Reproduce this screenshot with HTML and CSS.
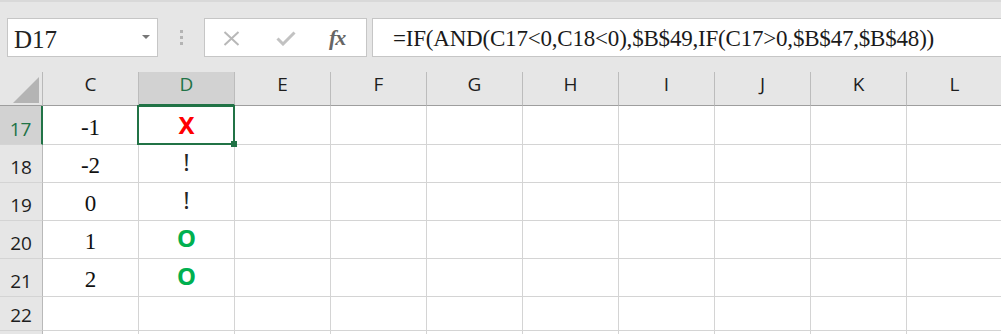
FILE: index.html
```html
<!DOCTYPE html>
<html>

<head>
    <title>Sheet1</title>
    <meta name="viewport" content="width=device-width, initial-scale=1.0">
    <link rel="stylesheet" href="styles.css">
</head>

<body>
    <div class="toolbar">
        <div class="name-box">
            <span class="name">D17</span>
            <span class="caret"></span>
        </div>
        <div class="grip"><i></i><i></i><i></i></div>
        <div class="fx-buttons">
            <svg class="icon-cancel" width="17" height="15" viewBox="0 0 17 15">
                <path d="M1.5 1 L15.5 14 M15.5 1 L1.5 14" stroke="#b8b8b8" stroke-width="2" fill="none" />
            </svg>
            <svg class="icon-enter" width="20" height="15" viewBox="0 0 20 15">
                <path d="M1.5 7.5 L7 13 L18.5 1.5" stroke="#c2c2c2" stroke-width="3" fill="none" />
            </svg>
            <span class="fx">fx</span>
        </div>
        <div class="formula">=IF(AND(C17&lt;0,C18&lt;0),$B$49,IF(C17&gt;0,$B$47,$B$48))</div>
    </div>

    <div class="sheet">
        <!-- column headers -->
        <div class="cell corner">
            <svg width="26" height="26" viewBox="0 0 26 26">
                <polygon points="26,0 26,26 0,26" fill="#b4b4b4" />
            </svg>
        </div>
        <div class="cell col-head">C</div>
        <div class="cell col-head current">D</div>
        <div class="cell col-head">E</div>
        <div class="cell col-head">F</div>
        <div class="cell col-head">G</div>
        <div class="cell col-head">H</div>
        <div class="cell col-head">I</div>
        <div class="cell col-head">J</div>
        <div class="cell col-head">K</div>
        <div class="cell col-head">L</div>

        <!-- row 17 -->
        <div class="cell row-head current">17</div>
        <div class="cell num">-1</div>
        <div class="cell mark bad active">X</div>
        <div class="cell"></div><div class="cell"></div><div class="cell"></div><div class="cell"></div>
        <div class="cell"></div><div class="cell"></div><div class="cell"></div><div class="cell"></div>

        <!-- row 18 -->
        <div class="cell row-head">18</div>
        <div class="cell num">-2</div>
        <div class="cell mark warn">!</div>
        <div class="cell"></div><div class="cell"></div><div class="cell"></div><div class="cell"></div>
        <div class="cell"></div><div class="cell"></div><div class="cell"></div><div class="cell"></div>

        <!-- row 19 -->
        <div class="cell row-head">19</div>
        <div class="cell num">0</div>
        <div class="cell mark warn">!</div>
        <div class="cell"></div><div class="cell"></div><div class="cell"></div><div class="cell"></div>
        <div class="cell"></div><div class="cell"></div><div class="cell"></div><div class="cell"></div>

        <!-- row 20 -->
        <div class="cell row-head">20</div>
        <div class="cell num">1</div>
        <div class="cell mark good">O</div>
        <div class="cell"></div><div class="cell"></div><div class="cell"></div><div class="cell"></div>
        <div class="cell"></div><div class="cell"></div><div class="cell"></div><div class="cell"></div>

        <!-- row 21 -->
        <div class="cell row-head">21</div>
        <div class="cell num">2</div>
        <div class="cell mark good">O</div>
        <div class="cell"></div><div class="cell"></div><div class="cell"></div><div class="cell"></div>
        <div class="cell"></div><div class="cell"></div><div class="cell"></div><div class="cell"></div>

        <!-- row 22 -->
        <div class="cell row-head">22</div>
        <div class="cell"></div><div class="cell"></div>
        <div class="cell"></div><div class="cell"></div><div class="cell"></div><div class="cell"></div>
        <div class="cell"></div><div class="cell"></div><div class="cell"></div><div class="cell"></div>

        <!-- next row, only its top edge shows -->
        <div class="cell row-head"></div>
        <div class="cell"></div><div class="cell"></div>
        <div class="cell"></div><div class="cell"></div><div class="cell"></div><div class="cell"></div>
        <div class="cell"></div><div class="cell"></div><div class="cell"></div><div class="cell"></div>
    </div>
</body>

</html>
```

FILE: styles.css
```css
body {
    margin: 0;
    padding: 0;
    width: 1001px;
    height: 334px;
    overflow: hidden;
    background-color: #fff;
    font-family: "Liberation Serif", serif;
    color: #1a1a1a;
}

/* formula bar */
.toolbar {
    height: 72px;
    box-sizing: border-box;
    background-color: #e6e6e6;
    border-top: 2px solid #d9d9d9;
    display: flex;
    align-items: flex-start;
    padding: 16px 0 0 7px;
}

.name-box {
    width: 151px;
    height: 39px;
    box-sizing: border-box;
    border: 1px solid #c6c6c6;
    background-color: #fff;
    display: flex;
    align-items: center;
    justify-content: space-between;
    padding: 0 7px 0 6px;
}

.name {
    font-family: "Liberation Serif", serif;
    font-size: 25px;
    line-height: 25px;
    margin-top: 3px;
    color: #222;
}

.caret {
    width: 0;
    height: 0;
    border-left: 4px solid transparent;
    border-right: 4px solid transparent;
    border-top: 4px solid #777;
    margin-top: -2px;
}

.grip {
    width: 46px;
    height: 39px;
    display: flex;
    flex-direction: column;
    align-items: center;
    justify-content: center;
    gap: 3px;
}

.grip i {
    display: block;
    width: 3px;
    height: 3px;
    background-color: #b4b4b4;
}

.fx-buttons {
    width: 163px;
    height: 39px;
    box-sizing: border-box;
    border: 1px solid #c6c6c6;
    background-color: #fff;
    display: flex;
    align-items: center;
}

.icon-cancel {
    margin-left: 18px;
    margin-top: 1px;
}

.icon-enter {
    margin-left: 36px;
    margin-top: 1px;
}

.fx {
    margin-left: 33px;
    font-style: italic;
    font-weight: bold;
    font-size: 22px;
    line-height: 22px;
    color: #666;
    letter-spacing: -1px;
}

.formula {
    flex: 1;
    margin-left: 5px;
    margin-right: -2px;
    height: 39px;
    box-sizing: border-box;
    border: 1px solid #c6c6c6;
    background-color: #fff;
    display: flex;
    align-items: center;
    padding: 3px 0 0 20px;
    font-size: 23px;
    letter-spacing: -0.2px;
    white-space: nowrap;
}

/* grid */
.sheet {
    display: grid;
    grid-template-columns: 43px repeat(10, 96px);
    grid-template-rows: 34px 39px 38px 38px 38px 38px 34px 38px;
}

.cell {
    box-sizing: border-box;
    border-right: 1px solid #d4d4d4;
    border-bottom: 1px solid #d4d4d4;
    display: flex;
    align-items: flex-end;
    justify-content: center;
    min-width: 0;
}

.corner {
    background-color: #e6e6e6;
    border-right-color: #b9b9b9;
    border-bottom-color: #9e9e9e;
    justify-content: flex-end;
    padding: 0 3px 2px 0;
}

.corner svg {
    display: block;
}

.col-head {
    background-color: #e6e6e6;
    border-right-color: #bcbcbc;
    border-bottom-color: #9e9e9e;
    font-family: "Open Sans", sans-serif;
    font-size: 19px;
    line-height: 19px;
    color: #1e1e1e;
    padding-bottom: 11px;
}

.col-head.current {
    background-color: #d2d2d2;
    color: #217346;
    border-bottom: 2px solid #217346;
    padding-bottom: 10px;
}

.row-head {
    background-color: #e6e6e6;
    border-right-color: #b9b9b9;
    font-family: "Open Sans", sans-serif;
    font-size: 19px;
    line-height: 19px;
    color: #1e1e1e;
    padding-bottom: 5px;
}

.row-head.current {
    background-color: #d2d2d2;
    color: #217346;
    border-right: 2px solid #217346;
}

.num {
    font-size: 23px;
    line-height: 23px;
    padding-bottom: 5px;
    color: #111;
}

.mark {
    font-family: "Noto Sans", sans-serif;
    font-weight: bold;
    font-size: 24px;
    line-height: 24px;
    padding-bottom: 8px;
    color: #262626;
}

.mark.warn {
    font-weight: normal;
}

.mark.bad {
    color: #ff0000;
    padding-bottom: 7px;
}

.mark.good {
    color: #00b050;
}

/* selected cell */
.active {
    position: relative;
}

.active::before {
    content: '';
    position: absolute;
    left: -2px;
    top: -1px;
    right: -1px;
    bottom: -1px;
    border: 2px solid #217346;
}

.active::after {
    content: '';
    position: absolute;
    left: 92px;
    top: 35px;
    width: 6px;
    height: 6px;
    background-color: #217346;
}
```
